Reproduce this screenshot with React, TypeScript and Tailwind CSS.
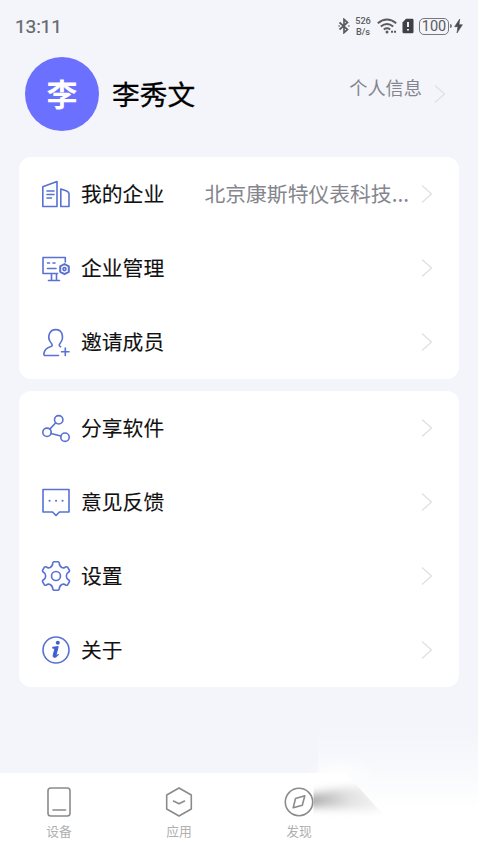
import type { ReactNode } from "react";

function Chevron() {
  return (
    <svg className="h-5 w-3 shrink-0" viewBox="0 0 12 20" fill="none" stroke="#e1e1e4" strokeWidth="1.4">
      <path d="M1 1.5 10.5 10 1 18.5" />
    </svg>
  );
}

function Glyph({ children }: { children: ReactNode }) {
  return (
    <svg
      className="h-8 w-8 shrink-0"
      viewBox="0 0 32 32"
      fill="none"
      stroke="#5871d3"
      strokeWidth="1.6"
      strokeLinejoin="round"
      strokeLinecap="round"
    >
      {children}
    </svg>
  );
}

const company = (
  <Glyph>
    <path d="M2.8 28.5V8.8L17 3.6V28.5ZM20.8 28.5V11L26 12.8Q29 14 29 16V28.5ZM7 13H14M7 16.5H14M7 20H11.5" />
  </Glyph>
);
const manage = (
  <Glyph>
    <path d="M25.3 10V5.5H3V21.5H17.5M11.5 21.5V28M16.5 21.5V28M8.5 28.5H19.5M7.5 11H9.5M13 11H15M7.5 16.5H16" />
    <path strokeWidth="2" d="M24.5 12 28.8 14.4V19.8L24.5 22.2 20.2 19.8V14.4Z" />
    <circle cx="24.5" cy="17.1" r="1.5" />
  </Glyph>
);
const invite = (
  <Glyph>
    <path d="M18.5 29.5H5.5Q3.5 29.5 4 27.3C4.6 23.5 7.2 21.6 11 20.5C12.6 20 12.5 18.7 11.5 17.5C8.6 14.2 8.2 10.5 9.6 7.4C11.8 2.3 19.8 2.3 21.8 7.4C23.1 10.9 22.4 14.5 20 17.4C18.8 19 19 20 20.6 20.7M25.3 22V29.5M21.5 25.8H29" />
  </Glyph>
);
const share = (
  <Glyph>
    <circle cx="18.7" cy="7.8" r="4.2" />
    <circle cx="7" cy="20.3" r="4.2" />
    <circle cx="25" cy="25.2" r="4.2" />
    <path d="m15.8 10.8-6 6.3M11 21.4 20.9 24" />
  </Glyph>
);
const feedback = (
  <Glyph>
    <path d="M3 3.5H29V26H19.4L16 29.5 12.6 26H3Z" />
    <path strokeWidth="2" d="M9.5 14.8H9.6M16 14.8H16.1M22.5 14.8H22.6" />
  </Glyph>
);
const settings = (
  <Glyph>
    <path d="M14 1.8H18Q19 1.8 19.2 2.8 19.2 6 21.8 7.5 23.8 8.4 25.7 7 27 6.3 27.7 7.3L29.3 10Q30 11 29 11.8 26.3 13.5 26.3 16 26.3 18.5 29 20.2 30 21 29.3 22L27.7 24.7Q27 25.7 25.7 25 23.8 23.6 21.8 24.5 19.2 26 19.2 29.2 19 30.2 18 30.2H14Q13 30.2 12.8 29.2 12.8 26 10.2 24.5 8.2 23.6 6.3 25 5 25.7 4.3 24.7L2.7 22Q2 21 3 20.2 5.7 18.5 5.7 16 5.7 13.5 3 11.8 2 11 2.7 10L4.3 7.3Q5 6.3 6.3 7 8.2 8.4 10.2 7.5 12.8 6 12.8 2.8 13 1.8 14 1.8Z" />
    <circle cx="16" cy="16" r="4.5" />
  </Glyph>
);
const about = (
  <Glyph>
    <circle cx="16" cy="16" r="13" />
    <circle cx="17.8" cy="8.8" r="2" fill="#3f5fd0" stroke="none" />
    <path fill="#3f5fd0" stroke="#3f5fd0" strokeWidth="1" d="M13 13.2 18.2 12.6 16 21.3Q16.3 21.8 18.5 20.5C17.2 23.2 12.5 25 13.2 21.2L15 14.2H13Z" />
  </Glyph>
);

function Row({ icon, label, value }: { icon: ReactNode; label: string; value?: string }) {
  return (
    <div className="flex h-[74px] items-center pr-[26px] pl-[21px]">
      {icon}
      <span className="mb-0.5 ml-[9px] flex-1 text-[20.8px] leading-8 text-[#111111] [-webkit-text-stroke:0.1px_#111111]">{label}</span>
      {value && <span className="mr-3 mb-0.5 text-[20.8px] leading-8 text-[#85858e]">{value}</span>}
      <Chevron />
    </div>
  );
}

function Tab({ label, children }: { label: string; children: ReactNode }) {
  return (
    <div className="flex w-[120px] flex-col items-center pt-[13px]">
      <svg className="h-8 w-8" viewBox="0 0 32 32" fill="none" stroke="#8b8b8d" strokeWidth="1.6" strokeLinejoin="round" strokeLinecap="round">
        {children}
      </svg>
      <span className="mt-[3px] text-[12.8px] leading-5 text-[#b0b0b2]">{label}</span>
    </div>
  );
}

function StatusBar() {
  return (
    <header className="flex h-[52px] items-center justify-between pr-[15px] pl-[15px] text-[#5a5b5e]">
      <span className="mt-px font-['Roboto',sans-serif] text-[19.2px] leading-none tracking-[-0.2px] text-[#66676a] [-webkit-text-stroke:0.2px_#66676a]">13:11</span>
      <div className="flex items-center">
        <svg className="h-4 w-3" viewBox="0 0 12 16" fill="none" stroke="currentColor" strokeWidth="1.7">
          <path d="m1.5 4.5 8 7L6 14.7V1.3l3.5 3.2-8 7" />
          <path d="M.5 8h1.2M10.3 8h1.2" />
        </svg>
        <div className="ml-[5px] w-4 text-center font-['Roboto',sans-serif] text-[9.2px] font-medium">
          <div className="leading-[11px]">526</div>
          <div className="leading-[11px]">B/s</div>
        </div>
        <svg className="ml-1.5 h-4 w-5" viewBox="0 0 20 16" fill="none" stroke="currentColor" strokeWidth="2">
          <path d="M.8 5.2Q10-2.2 19.2 5.2M3.8 8.5Q10 3.4 16.2 8.5M6.8 11.5Q10 9 13.2 11.5" />
          <circle cx="10" cy="14" r="1.5" fill="currentColor" stroke="none" />
          <path d="M14 13.7h2M17 13.7h2" />
        </svg>
        <svg className="ml-[5px] h-4 w-3" viewBox="0 0 12 16">
          <path d="M4 .8H10.2Q11.5.8 11.5 2V14Q11.5 15.3 10.2 15.3H1.8Q.5 15.3.5 14V4.5Z" fill="#404144" />
          <path d="M6 4v5M6 11v1.6" stroke="#f4f5fa" strokeWidth="1.9" />
        </svg>
        <div className="ml-[5px] flex h-[17px] w-[30px] items-center justify-center rounded-[5px] border border-[#77787b] font-['Roboto',sans-serif] text-[14.5px] leading-none">
          <span className="pt-[2px]">100</span>
        </div>
        <div className="ml-px h-1 w-[2px] rounded-r bg-[#77787b]" />
        <svg className="ml-0.5 h-4 w-[9px]" viewBox="0 0 9 16" fill="#4b4c4f" stroke="#4b4c4f" strokeWidth=".6">
          <path d="M5.7 1 .6 8.7H3.9L3 15 8.4 6.7H5Z" />
        </svg>
      </div>
    </header>
  );
}

export default function App() {
  return (
    <div className="relative flex h-[850px] w-[478px] flex-col overflow-hidden bg-[#f4f5fa] font-['Noto_Sans_CJK_SC',sans-serif]">
      <StatusBar />
      <section className="flex h-[105px] items-start pr-[32px] pl-[25px]">
        <div className="mt-[5px] flex h-[74px] w-[74px] items-center justify-center rounded-full bg-[#6c70ff] text-[31px] font-bold text-white">
          <span className="mb-1 leading-none">李</span>
        </div>
        <h1 className="mt-[21px] ml-[13px] flex-1 text-[27.7px] leading-10 text-black [-webkit-text-stroke:0.3px_black]">李秀文</h1>
        <span className="mt-[21px] mr-3 text-[18.2px] leading-7 text-[#85858e]">个人信息</span>
        <div className="mt-8">
          <Chevron />
        </div>
      </section>
      <main className="mr-[19px] ml-[19px] flex flex-col gap-3">
        <section className="rounded-xl bg-white">
          <Row icon={company} label="我的企业" value="北京康斯特仪表科技..." />
          <Row icon={manage} label="企业管理" />
          <Row icon={invite} label="邀请成员" />
        </section>
        <section className="rounded-xl bg-white">
          <Row icon={share} label="分享软件" />
          <Row icon={feedback} label="意见反馈" />
          <Row icon={settings} label="设置" />
          <Row icon={about} label="关于" />
        </section>
      </main>
      <nav className="mt-auto -ml-px flex h-[77px] bg-white">
        <Tab label="设备">
          <rect x="5" y="2" width="22" height="28" rx="2.8" />
          <path d="M10 24h12.5" />
        </Tab>
        <Tab label="应用">
          <path d="m16 2 12.3 7v14L16 30 3.7 23V9ZM10.5 15l5.5 2.8 5.5-2.8" />
        </Tab>
        <Tab label="发现">
          <circle cx="16" cy="16" r="13.7" />
          <path d="m12.5 12.5 9.3-2.7-2.5 9.4-9.1 2.6Z" />
        </Tab>
      </nav>
      <svg className="pointer-events-none absolute right-0 bottom-0 h-[120px] w-[170px]" viewBox="0 0 170 120">
        <defs>
          <linearGradient id="haze" x1="0" y1="0" x2="0" y2="1">
            <stop offset="0" stopColor="#f4f5fa" />
            <stop offset=".45" stopColor="#f8f9fc" />
            <stop offset="1" stopColor="#ffffff" />
          </linearGradient>
          <radialGradient id="corner">
            <stop offset="0" stopColor="#ffffff" stopOpacity=".8" />
            <stop offset="1" stopColor="#ffffff" stopOpacity="0" />
          </radialGradient>
          <linearGradient id="trail" x1="0" y1="0" x2="1" y2="0">
            <stop offset="0" stopColor="#8c8c8c" />
            <stop offset=".25" stopColor="#bfbfc0" />
            <stop offset=".55" stopColor="#e2e2e3" />
            <stop offset="1" stopColor="#f8f8f9" />
          </linearGradient>
          <filter id="soft" x="-20%" y="-60%" width="140%" height="220%">
            <feGaussianBlur stdDeviation="4" />
          </filter>
          <clipPath id="edge">
            <path d="M5.5 43H38L74 83V120H5.5Z" />
          </clipPath>
        </defs>
        <path d="M10 0H170V80H75L37 43H10Z" fill="url(#haze)" />
        <ellipse cx="32" cy="43" rx="36" ry="17" fill="url(#corner)" />
        <g clipPath="url(#edge)">
          <path d="M-6 67 20 61 54 56 80 81 40 79 -6 76Z" fill="url(#trail)" filter="url(#soft)" />
        </g>
      </svg>
    </div>
  );
}
